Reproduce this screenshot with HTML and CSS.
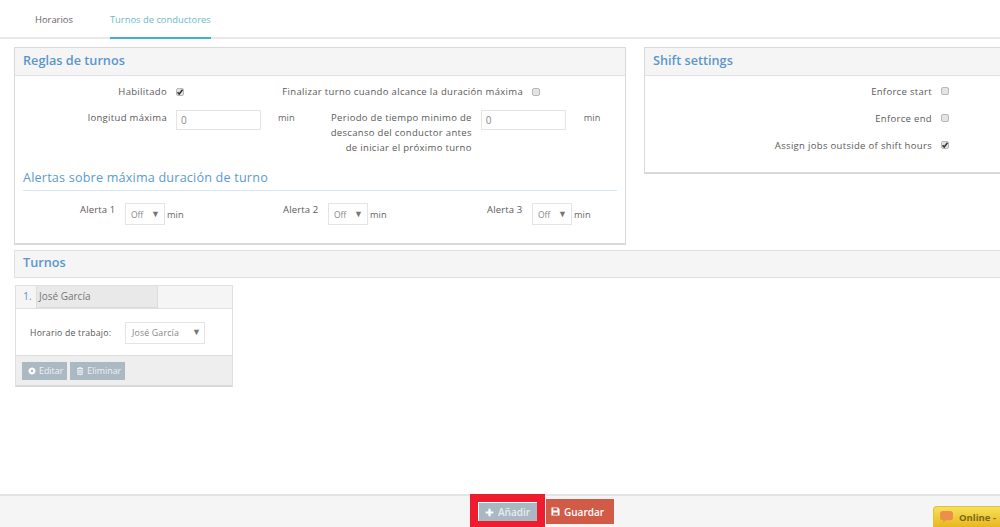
FILE: index.html
```html
<!DOCTYPE html>
<html lang="es">
<head>
<meta charset="utf-8">
<title>Turnos de conductores</title>
<link rel="stylesheet" href="styles.css">
</head>
<body>
<div class="page">
  <nav class="tabs">
    <a class="tab">Horarios</a>
    <a class="tab active">Turnos de conductores</a>
  </nav>
  <main class="content">
    <div class="top-panels">
      <section class="panel rules">
        <h2 class="panel-head">Reglas de turnos</h2>
        <div class="rules-body">
          <div class="row row-check">
            <span class="lbl lbl-a">Habilitado</span>
            <span class="check on check-gap"><svg viewBox="0 0 8 8"><path d="M1.5 4.2 3.2 6 6.5 1.8" fill="none" stroke="#333" stroke-width="1.5"/></svg></span>
            <span class="lbl lbl-b">Finalizar turno cuando alcance la duración máxima</span>
            <span class="check check-gap"></span>
          </div>
          <div class="row row-inputs">
            <span class="lbl lbl-a">longitud máxima</span>
            <span class="input">0</span>
            <span class="unit unit-a">min</span>
            <span class="lbl lbl-c">Periodo de tiempo minimo de<br>descanso del conductor antes<br>de iniciar el próximo turno</span>
            <span class="input">0</span>
            <span class="unit unit-b">min</span>
          </div>
          <h3 class="sub-head">Alertas sobre máxima duración de turno</h3>
          <div class="alerts">
            <div class="alert alert-1"><span class="alert-lbl">Alerta 1</span><span class="select"><span>Off</span><i class="arrow">▼</i></span><span class="alert-min">min</span></div>
            <div class="alert alert-2"><span class="alert-lbl">Alerta 2</span><span class="select"><span>Off</span><i class="arrow">▼</i></span><span class="alert-min">min</span></div>
            <div class="alert alert-3"><span class="alert-lbl">Alerta 3</span><span class="select"><span>Off</span><i class="arrow">▼</i></span><span class="alert-min">min</span></div>
          </div>
        </div>
      </section>
      <section class="panel settings">
        <h2 class="panel-head">Shift settings</h2>
        <div class="settings-body">
          <div class="set-row"><span class="lbl">Enforce start</span><span class="check"></span></div>
          <div class="set-row"><span class="lbl">Enforce end</span><span class="check"></span></div>
          <div class="set-row"><span class="lbl">Assign jobs outside of shift hours</span><span class="check on"><svg viewBox="0 0 8 8"><path d="M1.5 4.2 3.2 6 6.5 1.8" fill="none" stroke="#333" stroke-width="1.5"/></svg></span></div>
        </div>
      </section>
    </div>
    <section class="shifts">
      <h2 class="panel-head">Turnos</h2>
      <div class="card">
        <div class="card-head"><span class="num">1.</span><span class="name">José García</span></div>
        <div class="card-body">
          <span class="card-lbl">Horario de trabajo:</span>
          <span class="select wide"><span>José García</span><i class="arrow">▼</i></span>
        </div>
        <div class="card-foot">
          <span class="mini-btn"><svg class="ico" viewBox="0 0 10 10"><path fill="#fff" fill-rule="evenodd" d="M4 .5h2l.3 1.2 1.1-.5 1.4 1.4-.5 1.1 1.2.3v2l-1.2.3.5 1.1-1.4 1.4-1.1-.5L6 9.5H4l-.3-1.2-1.1.5-1.4-1.4.5-1.1L.5 6V4l1.2-.3-.5-1.1 1.4-1.4 1.1.5zM5 3.5a1.5 1.5 0 1 0 0 3 1.5 1.5 0 0 0 0-3z"/></svg>Editar</span>
          <span class="mini-btn"><svg class="ico" viewBox="0 0 10 10"><path fill="none" stroke="#fff" d="M1.5 2h7M3.5 2V.8h3V2M2.3 2v7.3h5.4V2M4 3.5v4.5M6 3.5v4.5"/></svg>Eliminar</span>
        </div>
      </div>
    </section>
  </main>
  <footer class="footer">
    <span class="mark"><span class="btn add"><svg class="ico-big" viewBox="0 0 10 10"><path fill="#fff" d="M3.8.8h2.4v3h3v2.4h-3v3H3.8v-3h-3V3.800h3z"/></svg>Añadir</span></span>
    <span class="btn save"><svg class="ico-big" viewBox="0 0 10 10"><path fill="#fff" fill-rule="evenodd" d="M.5.500h7.200l1.800 1.800v7.200h-9zM2.500 1.500v2.500h4.500V1.500zM2.500 6v2.500h5V6z"/></svg>Guardar</span>
  </footer>
  <div class="chat"><svg class="bubble" viewBox="0 0 14 13"><path fill="#ec8f4a" d="M3 0h8a3 3 0 0 1 3 3v4a3 3 0 0 1-3 3H6l-2.500 3V10H3a3 3 0 0 1-3-3V3a3 3 0 0 1 3-3z"/></svg><span>Online -</span></div>
</div>
</body>
</html>
```
FILE: styles.css
```css
* { box-sizing: border-box; }
html, body { margin: 0; padding: 0; height: 527px; overflow: hidden; background: #fff; }
body { font-family: "Open Sans", "Liberation Sans", sans-serif; font-size: 10px; color: #555; }
.page { position: relative; width: 1000px; height: 527px; display: flex; flex-direction: column; overflow: hidden; }

.tabs { height: 39px; border-bottom: 2px solid #e8e8e8; display: flex; padding-left: 35px; flex: none; }
.tab { height: 39px; padding-top: 13px; font-size: 9.4px; color: #666; line-height: 13px; }
.tab + .tab { margin-left: 37px; }
.tab.active { color: #6cbcc7; border-bottom: 2px solid #3db4c1; }

.content { flex: 1; min-height: 0; padding-top: 8px; }
.top-panels { display: flex; padding-left: 14px; gap: 18px; align-items: flex-start; }
.panel { border: 1px solid #d9d9d9; border-bottom-width: 2px; background: #fff; }
.rules { width: 612px; height: 198px; flex: none; }
.settings { width: 370px; height: 127px; flex: none; }
.panel-head { margin: 0; height: 28px; background: #f5f5f5; border-bottom: 1px solid #e0e0e0; padding-left: 8px; font-size: 12.7px; line-height: 25px; font-weight: 600; color: #5b95cc; }

.rules-body { padding-top: 8px; }
.row { display: flex; }
.lbl { font-size: 9.500px; letter-spacing: .32px; color: #5a5a5a; line-height: 15px; white-space: nowrap; }
.row-check { height: 15px; align-items: center; }
.lbl-a { width: 152px; text-align: right; flex: none; }
.check { width: 8px; height: 8px; flex: none; border-radius: 2px; background: #e4e4e4; border: 1px solid #b8b8b8; display: block; }
.check svg { display: block; width: 8px; height: 8px; margin: -1px; }
.check-gap { margin-left: 9px; }
.lbl-b { width: 339px; text-align: right; flex: none; }

.row-inputs { margin-top: 11px; align-items: flex-start; }
.input { width: 85px; height: 20px; flex: none; margin-left: 9px; border: 1px solid #e4e4e4; padding-left: 4px; font-size: 10px; line-height: 19px; color: #888; }
.unit { font-size: 9.200px; letter-spacing: .1px; color: #666; line-height: 15px; flex: none; }
.unit-a { margin-left: 17px; }
.lbl-c { width: 145px; margin-left: 32px; text-align: right; flex: none; }
.unit-b { margin-left: 18px; }

.sub-head { margin: 15px 8px 0; height: 21px; border-bottom: 1px solid #d6e6f2; font-size: 12.600px; line-height: 15px; font-weight: 400; color: #5b9ad2; letter-spacing: .2px; }

.alerts { display: flex; margin-top: 12px; position: relative; }
.alert { display: flex; align-items: flex-start; flex: none; }
.alert-1 { width: 204px; padding-left: 65px; }
.alert-2 { width: 204px; padding-left: 64px; }
.alert-3 { padding-left: 64px; }
.alert-lbl { font-size: 9.500px; line-height: 15px; color: #5a5a5a; width: 37px; margin: -1px 8px 0 0; letter-spacing: .15px; white-space: nowrap; }
.select { width: 40px; height: 22px; border: 1px solid #e4e4e4; display: flex; align-items: center; justify-content: space-between; padding: 0 4px 0 5px; font-size: 8.500px; color: #888; background: #fff; flex: none; }
.arrow { font-style: normal; font-size: 9px; color: #777; margin-top: -2px; }
.alert-min { font-size: 9.200px; color: #666; margin: 4px 0 0 2px; line-height: 15px; letter-spacing: .1px; }

.settings-body { padding-top: 8px; }
.set-row { height: 27px; padding-right: 64px; display: flex; justify-content: flex-end; align-items: flex-start; }
.set-row .lbl { line-height: 15px; }
.set-row .check { margin: 3px 0 0 9px; }

.shifts { margin: 5px 0 0 14px; }
.shifts .panel-head { height: 28px; border: 1px solid #e0e0e0; border-right: 0; line-height: 23px; }
.card { margin: 7px 0 0 1px; width: 218px; border: 1px solid #e0e0e0; border-bottom: 2px solid #d9d9d9; }
.card-head { height: 23px; background: #f5f5f5; border-bottom: 1px solid #e0e0e0; display: flex; align-items: stretch; padding-left: 7px; }
.num { font-size: 10.500px; color: #5b95cc; line-height: 21px; width: 13px; flex: none; }
.name { width: 122px; background: #e9e9e9; border: 1px solid #dcdcdc; border-top-width: 0; padding-left: 2px; font-size: 10px; line-height: 21px; color: #777; }
.card-body { height: 46px; display: flex; align-items: center; padding: 1px 0 0 14px; }
.card-lbl { font-size: 8.700px; letter-spacing: .22px; color: #555; width: 95px; flex: none; white-space: nowrap; }
.select.wide { width: 80px; height: 22px; font-size: 8.800px; letter-spacing: .15px; padding: 0 3px 0 6px; }
.card-foot { height: 30px; background: #eee; border-top: 1px solid #dedede; display: flex; gap: 3px; padding: 6px 0 0 6px; }
.mini-btn { height: 18px; background: #aab9c2; color: #eef2f4; font-size: 8.900px; line-height: 18px; display: flex; align-items: center; padding: 0 4px 0 6px; }
.ico { width: 8px; height: 8px; margin-right: 3px; flex: none; }

.footer { flex: none; height: 33px; background: #f5f5f5; border-top: 2px solid #e4e4e4; display: flex; align-items: flex-start; padding-left: 470px; }
.mark { display: block; width: 75px; height: 33px; margin-top: -2px; border: 8px solid #ee1c2e; border-bottom-width: 6px; background: #fff; flex: none; padding: 1px 0 0 1px; }
.btn { display: flex; align-items: center; color: #fff; font-weight: 600; font-size: 10px; }
.ico-big { width: 9px; height: 9px; margin-right: 4px; flex: none; }
.add { width: 58px; height: 18px; background: #a9b9c3; color: #e6ecef; padding-left: 6px; }
.save { width: 68px; height: 25px; margin: 3px 0 0 1px; background: #d15b47; padding-left: 5px; }

.chat { position: absolute; right: 0; bottom: 0; width: 67px; height: 21px; border-radius: 4px 0 0 0; background: linear-gradient(#f6e05a, #e8b81e); border: 1px solid #e0c040; border-width: 1px 0 0 1px; display: flex; align-items: center; padding-left: 6px; font-size: 9.500px; font-weight: 700; color: #7a6a14; white-space: nowrap; }
.bubble { width: 13px; height: 12px; margin-right: 6px; flex: none; }
```
